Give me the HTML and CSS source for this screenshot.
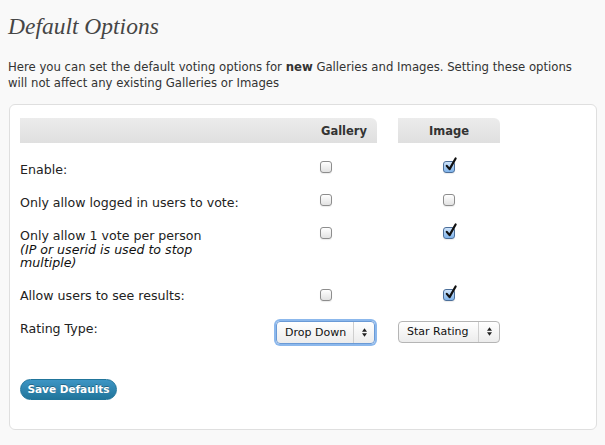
FILE: index.html
```html
<!DOCTYPE html>
<html>
<head>
<meta charset="utf-8">
<link rel="stylesheet" href="styles.css">
</head>
<body>
<h2 class="title">Default Options</h2>
<p class="intro">Here you can set the default voting options for <b>new</b> Galleries and Images. Setting these options will not affect any existing Galleries or Images</p>
<div class="card">
  <div class="opts">
    <div class="th th-gal">Gallery</div>
    <div class="th th-img">Image</div>

    <div class="lbl">Enable:</div>
    <div class="cell c-gal"><span class="cb"></span></div>
    <div class="cell c-img"><span class="cb on"><svg viewBox="0 0 14 16" class="tick"><path d="M3 9.5 L6 13 L12.5 1.5" /></svg></span></div>

    <div class="lbl">Only allow logged in users to vote:</div>
    <div class="cell c-gal"><span class="cb"></span></div>
    <div class="cell c-img"><span class="cb"></span></div>

    <div class="lbl">Only allow 1 vote per person<br><span class="note">(IP or userid is used to stop<br>multiple)</span></div>
    <div class="cell c-gal"><span class="cb"></span></div>
    <div class="cell c-img"><span class="cb on"><svg viewBox="0 0 14 16" class="tick"><path d="M3 9.5 L6 13 L12.5 1.5" /></svg></span></div>

    <div class="lbl">Allow users to see results:</div>
    <div class="cell c-gal c-low"><span class="cb"></span></div>
    <div class="cell c-img c-low"><span class="cb on"><svg viewBox="0 0 14 16" class="tick"><path d="M3 9.5 L6 13 L12.5 1.5" /></svg></span></div>

    <div class="lbl">Rating Type:</div>
    <div class="cell c-sel"><div class="sel focus"><span class="sel-text">Drop Down</span><span class="sel-arrows"><svg viewBox="0 0 6 10" class="arr"><path d="M0 4 L3 0 L6 4 Z M0 6 L3 10 L6 6 Z"/></svg></span></div></div>
    <div class="cell c-sel c-sel2"><div class="sel"><span class="sel-text">Star Rating</span><span class="sel-arrows"><svg viewBox="0 0 6 10" class="arr"><path d="M0 4 L3 0 L6 4 Z M0 6 L3 10 L6 6 Z"/></svg></span></div></div>
  </div>
  <button class="btn">Save Defaults</button>
</div>
</body>
</html>
```

FILE: styles.css
```css
html, body {
  margin: 0;
  padding: 0;
  background: #f9f9f9;
}
body {
  padding: 0 8px 0 8px;
  font-family: "DejaVu Sans", "Noto Sans", sans-serif;
  color: #333;
}
.title {
  margin: 0;
  padding-top: 12px;
  font-family: "Liberation Serif", "DejaVu Serif", serif;
  font-style: italic;
  font-weight: normal;
  font-size: 23.5px;
  line-height: 29px;
  color: #464646;
}
.intro {
  margin: 18px 0 0 0;
  max-width: 575px;
  font-size: 11.7px;
  line-height: 16px;
  color: #333;
}
.intro b {
  font-weight: bold;
}
.card {
  margin: 13px 0 0 1px;
  background: #fff;
  border: 1px solid #dfdfdf;
  border-radius: 6px;
  padding: 13px 10px 29px 10px;
}
.opts {
  display: grid;
  grid-template-columns: 254px 103px 21px 102px;
}
.th {
  height: 25px;
  line-height: 26px;
  font-size: 11.5px;
  font-weight: bold;
  color: #333;
  background: linear-gradient(#ececec, #dfdfdf);
  border-radius: 0 6px 0 0;
  margin-bottom: 10px;
}
.th-gal {
  grid-column: 1 / 3;
  text-align: right;
  padding-right: 10px;
}
.th-img {
  grid-column: 4;
  text-align: center;
}
.lbl {
  grid-column: 1;
  padding: 8px 0 8px 0;
  font-size: 12.6px;
  line-height: 17px;
  color: #222;
}
.note {
  display: inline-block;
  font-style: italic;
  font-size: 12.6px;
  line-height: 12.5px;
  color: #111;
}
.cell {
  padding-top: 8px;
  display: flex;
  justify-content: center;
  align-items: flex-start;
}
.c-gal { grid-column: 2; }
.c-img { grid-column: 4; }
.c-low { padding-top: 10px; }
.cb {
  position: relative;
  width: 10px;
  height: 10px;
  border: 1px solid #8d8d8d;
  border-radius: 3px;
  background: linear-gradient(#ffffff, #e2e2e2);
  box-shadow: 0 1px 1px rgba(0,0,0,0.08);
}
.cb.on {
  border-color: #4c6f9a;
  background: linear-gradient(#cfe4fb, #7fb3ea);
}
.tick {
  position: absolute;
  left: 0px;
  top: -5px;
  width: 13px;
  height: 15px;
  overflow: visible;
}
.tick path {
  fill: none;
  stroke: #111;
  stroke-width: 2.4;
  stroke-linecap: round;
  stroke-linejoin: round;
}
.c-sel {
  grid-column: 2;
  padding-top: 7px;
  padding-bottom: 8px;
  display: block;
}
.c-sel2 {
  grid-column: 4;
  padding-top: 9px;
}
.sel {
  display: flex;
  align-items: stretch;
  height: 20px;
  border: 1px solid #b5b5b5;
  border-radius: 4px;
  background: linear-gradient(#ffffff, #ececec);
  font-size: 11px;
  color: #111;
}
.sel.focus {
  height: 21px;
  border-color: #6a9ad6;
  box-shadow: 0 0 0 2px #8cb8ec;
  margin: 2px 2px 0 2px;
}
.sel-text {
  flex: 1;
  padding-left: 8px;
  line-height: 20px;
}
.focus .sel-text {
  line-height: 21px;
}
.sel-arrows {
  width: 20px;
  border-left: 1px solid #cfcfcf;
  display: flex;
  align-items: center;
  justify-content: center;
}
.arr {
  width: 5px;
  height: 9px;
}
.arr path {
  fill: #222;
}
.btn {
  display: block;
  margin-top: 27px;
  height: 21px;
  width: 97px;
  padding: 0;
  border: 1px solid #21759b;
  border-radius: 11px;
  background: linear-gradient(#3d95c4, #21759b);
  color: #fff;
  font-family: "DejaVu Sans", sans-serif;
  font-weight: bold;
  font-size: 10.5px;
  text-shadow: 0 -1px 0 rgba(0,0,0,0.3);
}
```
